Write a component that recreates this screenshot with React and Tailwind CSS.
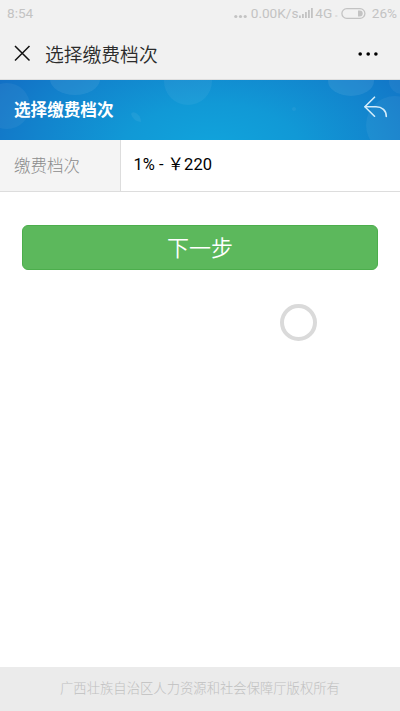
const FONT = "font-['Roboto','Noto_Sans_CJK_SC',sans-serif]";

function StatusBar() {
  return (
    <div className="flex h-7 items-center pl-[7px] pr-[3px] text-[13.6px] leading-7 text-[#c3c3c3]">
      <span className="-mt-0.5">8:54</span>
      <div className="ml-auto flex items-center">
        <svg className="mr-[4px]" width="13" height="28" fill="currentColor">
          <circle cx="1.8" cy="16.5" r="1.6" />
          <circle cx="6.5" cy="16.5" r="1.6" />
          <circle cx="11.2" cy="16.5" r="1.6" />
        </svg>
        <span className="-mt-0.5 w-[48px] whitespace-nowrap">0.00K/s</span>
        <svg width="14" height="28" fill="currentColor">
          <rect x="0" y="15.5" width="1.8" height="2.5" />
          <rect x="3" y="14" width="1.8" height="4" />
          <rect x="6" y="12" width="1.8" height="6" />
          <rect x="9" y="10" width="1.8" height="8" />
          <rect x="12" y="8" width="1.8" height="10" />
        </svg>
        <span className="-mt-0.5 ml-[2.5px] w-[18px]">4G</span>
        <span className="mt-1 w-[7.5px] text-[6px]">▫</span>
        <svg width="25" height="28">
          <rect x="0.9" y="8.7" width="23" height="9.6" rx="4.8" fill="none" stroke="currentColor" strokeWidth="1.3" />
          <path d="M17 10.5h1.7a3 3 0 0 1 0 6H17z" fill="currentColor" />
        </svg>
        <span className="-mt-0.5 ml-[6px]">26%</span>
      </div>
    </div>
  );
}

function TitleBar() {
  return (
    <div className="flex h-[52px] items-center border-b border-[#dedede] pl-[14px] pr-[21px]">
      <svg width="17" height="17" fill="none" stroke="#111111" strokeWidth="1.5">
        <path d="M1 1 15.5 15.5M15.5 1 1 15.5" />
      </svg>
      <h1 className="ml-[14px] pt-[4px] text-[18.8px] font-[350] leading-[48px] text-[#2c2c2c]">选择缴费档次</h1>
      <svg className="ml-auto" width="21" height="6" fill="#000000">
        <circle cx="2.2" cy="3" r="1.8" />
        <circle cx="10.2" cy="3" r="1.8" />
        <circle cx="17.9" cy="3" r="1.8" />
      </svg>
    </div>
  );
}

function Banner() {
  return (
    <div className="relative flex h-[60px] items-center overflow-hidden bg-[#1270c5] bg-[radial-gradient(ellipse_250px_130px_at_53%_115%,#11a4dc_0%,#1199d6_35%,#1284cd_70%,#1270c5_100%)] pl-[14px] pr-[12px]">
      {/* faint bubbles behind the heading */}
      <svg className="absolute inset-0" width="400" height="60" fill="#ffffff">
        <circle cx="7" cy="26" r="23" fillOpacity="0.05" />
        <ellipse cx="75" cy="-1" rx="25" ry="16" fillOpacity="0.07" />
        <circle cx="188" cy="1" r="24" fillOpacity="0.05" />
        <path d="M131 34q1-3 5-1 5 3 5 9-8-1-10-8z" fillOpacity="0.06" />
        <ellipse cx="351" cy="1" rx="23" ry="15" fillOpacity="0.08" />
        <circle cx="402" cy="1" r="13" fillOpacity="0.05" />
        <circle cx="395" cy="45" r="29" fillOpacity="0.05" />
        <circle cx="294" cy="29" r="2" fillOpacity="0.05" />
      </svg>
      <h2 className="relative pt-[2px] text-[16.6px] font-bold leading-[58px] text-white">选择缴费档次</h2>
      <svg
        className="relative -mt-[7px] ml-auto"
        width="24"
        height="22"
        fill="none"
        stroke="#d4ecfa"
        strokeWidth="1.6"
        strokeLinecap="round"
        strokeLinejoin="round"
      >
        <path d="M10.5 1.2.9 10.8l9.6 9.4" />
        <path d="M1.2 10.8H12c6 0 10.3 3.5 10.3 9.6" />
      </svg>
    </div>
  );
}

function LevelRow() {
  return (
    <div className="flex h-[52px] border-b border-[#dddddd] text-[16.5px]">
      <div className="w-[121px] border-r border-[#dddddd] bg-[#f4f4f4] pl-[14px] pt-[2px] font-light leading-[50px] text-[#8c8c8c]">
        缴费档次
      </div>
      <div className="flex-1 whitespace-nowrap bg-white pl-[12.5px] leading-[50px] text-black">
        1% - ￥220
      </div>
    </div>
  );
}

export default function App() {
  return (
    <div className={`flex h-[711px] w-[400px] flex-col overflow-hidden bg-white ${FONT}`}>
      <header className="bg-[#f1f1f1]">
        <StatusBar />
        <TitleBar />
      </header>
      <Banner />
      <LevelRow />
      <main className="flex flex-1 flex-col px-[22px] pt-[33px]">
        <button className="h-[45px] w-full rounded-[6px] border border-[#4cae4c] bg-[#5cb85c] pt-[2px] text-[22px] font-[350] leading-[41px] text-white">
          下一步
        </button>
        {/* touch indicator */}
        <div className="ml-[258px] mt-[34px] size-[37px] rounded-full border-4 border-[#dadada]" />
      </main>
      <footer className="h-[44px] bg-[#ebebeb] text-center text-[13.33px] font-light leading-[44px] text-[#c0c0c0]">
        广西壮族自治区人力资源和社会保障厅版权所有
      </footer>
    </div>
  );
}
